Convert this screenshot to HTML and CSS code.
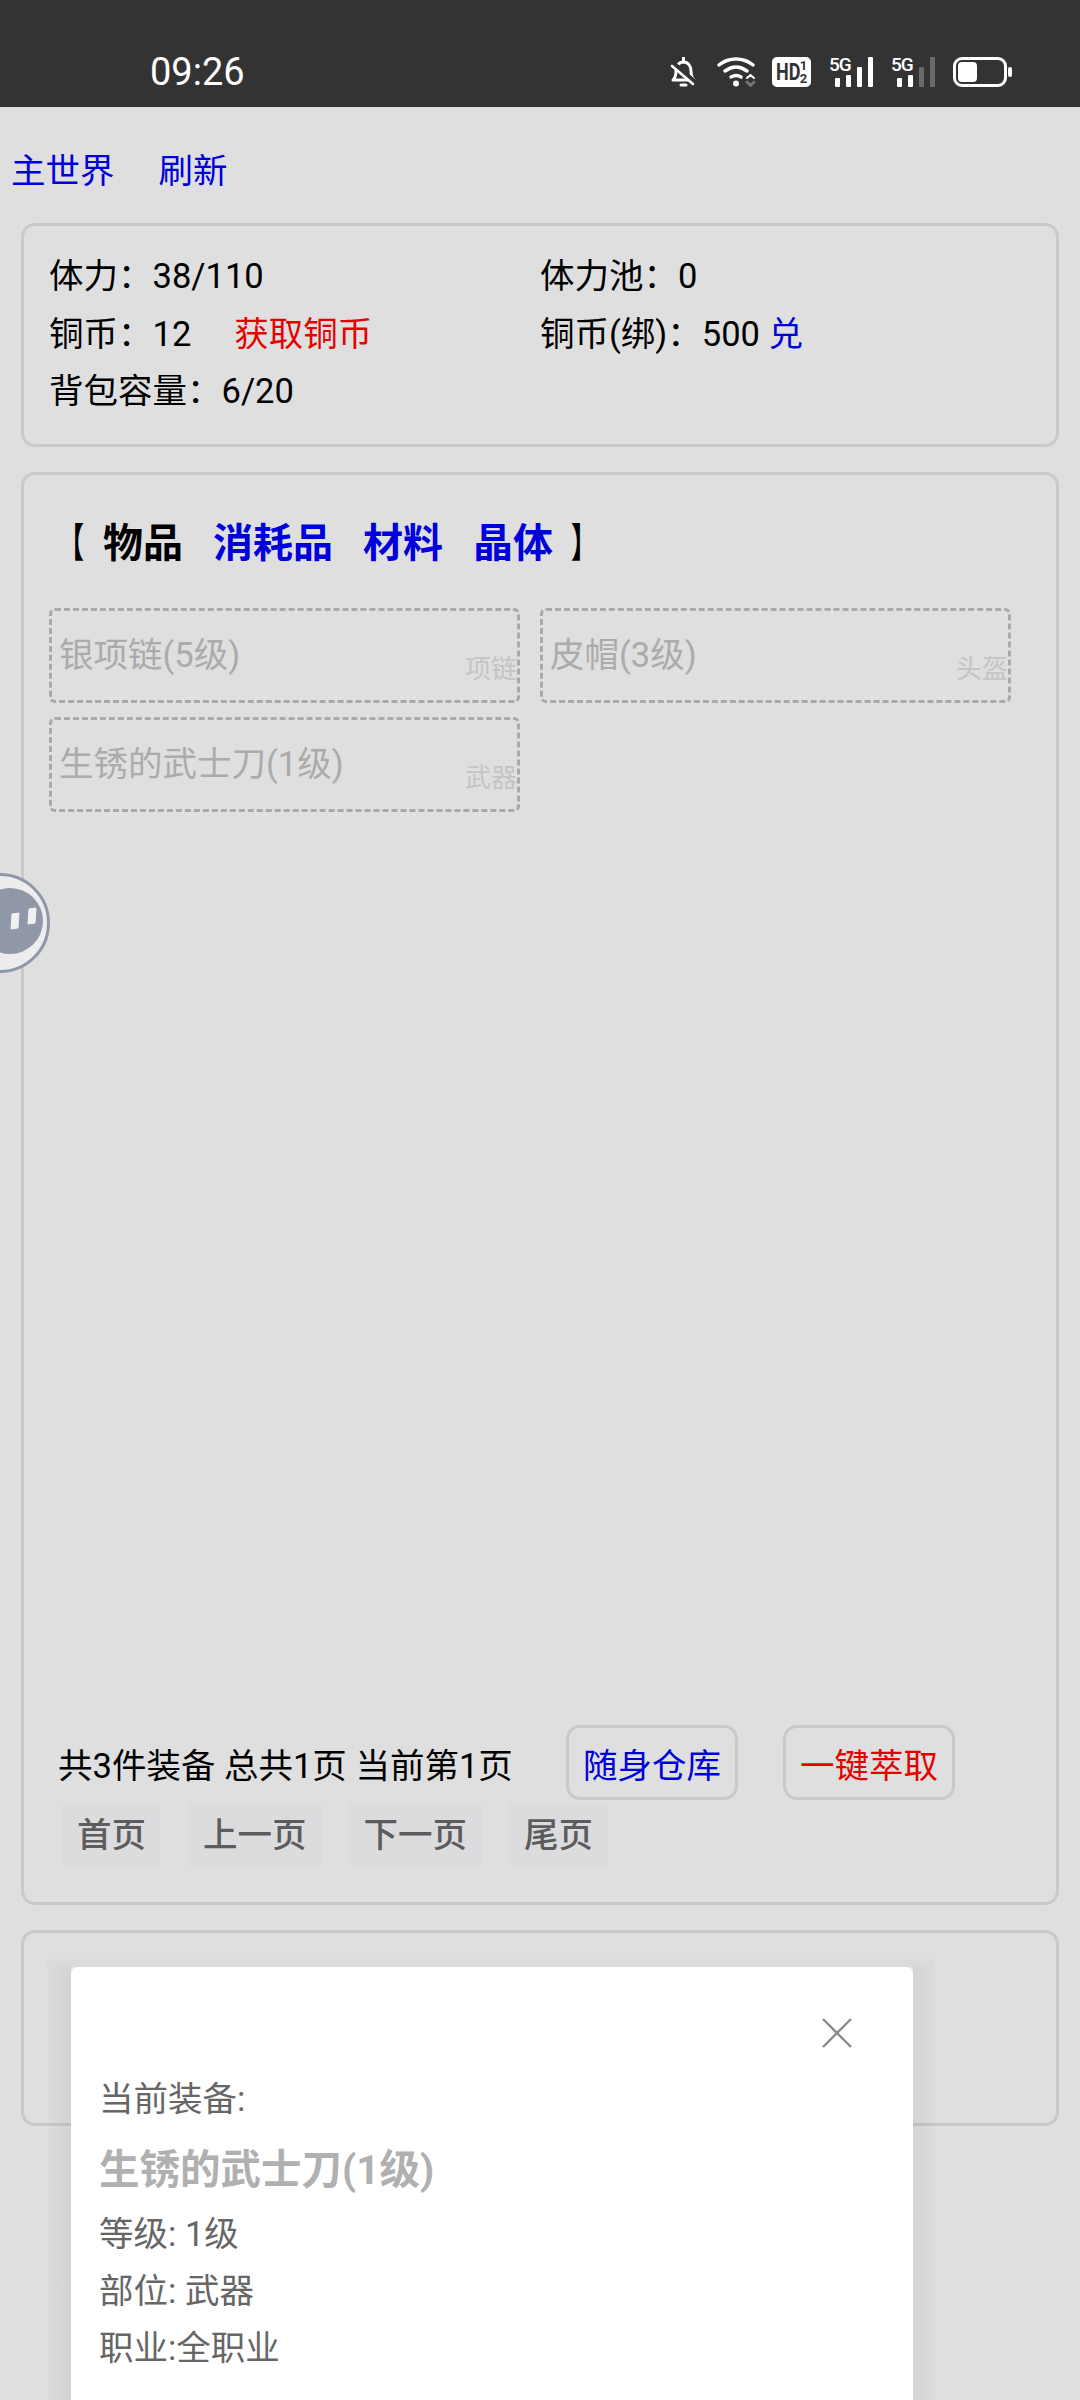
FILE: index.html
```html
<!DOCTYPE html>
<html lang="zh-CN">
<head>
    <meta charset="UTF-8">
    <meta name="viewport" content="width=device-width, initial-scale=1.0">
    <title>背包</title>
    <link rel="stylesheet" href="styles.css">
</head>
<body>

<div class="statusBar">
    <span class="clock">09:26</span>
    <div class="statusIcons">
        <svg class="bellIcon" width="27" height="30" viewBox="0 0 27 30" fill="none" stroke="#fff">
            <path d="M3 23c2-2 3-4 3-9 0-5 3-9 7.500-9s7.500 4 7.500 9c0 5 1 7 3 9z" stroke-width="3" stroke-linejoin="round"/>
            <path d="M13.500 1v4M11 28h5" stroke-width="3" stroke-linecap="round"/>
            <path d="M2 6l23 20" stroke="#333" stroke-width="6"/>
            <path d="M2 9l21 18" stroke-width="2.600" stroke-linecap="round"/>
        </svg>
        <svg class="wifiIcon" width="40" height="30" viewBox="0 0 40 30" fill="none" stroke="#fff" stroke-width="3.400" stroke-linecap="round">
            <path d="M2 8c10-8 24-8 34 0"/>
            <path d="M8 14c7-5 15-5 22 0"/>
            <path d="M14 20c4-2 7-2 10 0"/>
            <circle cx="19" cy="26.500" r="3" fill="#fff" stroke="none"/>
            <path d="M30 21l3.500-3 3.500 3" stroke-width="2"/>
            <path d="M30 25l3.500 3.500 3.500-3.500" stroke="#777" stroke-width="2.600"/>
        </svg>
        <span class="hdBadge"><span class="hdText">HD</span><span class="hdNum"><i>1</i><i>2</i></span></span>
        <div class="signal">
            <span class="netLabel">5G</span>
            <div class="bars">
                <i class="bar b1"></i><i class="bar b2"></i><i class="bar b3"></i><i class="bar b4"></i>
            </div>
        </div>
        <div class="signal">
            <span class="netLabel">5G</span>
            <div class="bars">
                <i class="bar b1"></i><i class="bar b2"></i><i class="bar b3 off"></i><i class="bar b4 off"></i>
            </div>
        </div>
        <div class="battery"><div class="batteryFill"></div></div>
    </div>
</div>

<div class="page">
    <div class="topLinks">
        <a>主世界</a>
        <a>刷新</a>
    </div>

    <div class="panel infoPanel">
        <div class="infoGrid">
            <div>体力：38/110</div>
            <div>体力池：0</div>
            <div>铜币：12<a class="red getCoin">获取铜币</a></div>
            <div>铜币(绑)：500 <a>兑</a></div>
            <div>背包容量：6/20</div>
        </div>
    </div>

    <div class="panel bagPanel">
        <div class="tabs">
            <span class="bracket">【</span>
            <span>物品</span>
            <a>消耗品</a>
            <a>材料</a>
            <a>晶体</a>
            <span class="bracket lastBracket">】</span>
        </div>
        <div class="itemGrid">
            <div class="item">银项链(5级)<span class="itemType">项链</span></div>
            <div class="item">皮帽(3级)<span class="itemType">头盔</span></div>
            <div class="item">生锈的武士刀(1级)<span class="itemType">武器</span></div>
        </div>
        <div class="bagFooter">
            <div class="summary">
                <span class="summaryText">共3件装备 总共1页 当前第1页</span>
                <a class="actionBtn">随身仓库</a>
                <a class="actionBtn red">一键萃取</a>
            </div>
            <div class="pager">
                <span>首页</span>
                <span>上一页</span>
                <span>下一页</span>
                <span>尾页</span>
            </div>
        </div>
    </div>

    <div class="panel lastPanel"></div>
</div>

<svg class="floatBall" width="52" height="104" viewBox="0 0 52 104">
    <circle cx="0" cy="52" r="48.500" fill="#eeeeee" stroke="#8b94a6" stroke-width="3"/>
    <circle cx="10" cy="50" r="33" fill="#8b94a6"/>
    <path d="M12 43l7-1-1 15-7 1z" fill="#f2f2f2" stroke="#f2f2f2" stroke-width="1" stroke-linejoin="round"/>
    <path d="M29 38l7-1-1 15-7 1z" fill="#f2f2f2" stroke="#f2f2f2" stroke-width="1" stroke-linejoin="round"/>
</svg>

<div class="modal">
    <svg class="closeIcon" width="32" height="30" viewBox="0 0 32 30" stroke="#8a8a8a" stroke-width="2.400" fill="none">
        <path d="M2 1l28 28M30 1L2 29"/>
    </svg>
    <div class="modalLine firstLine">当前装备:</div>
    <div class="modalTitle">生锈的武士刀(1级)</div>
    <div class="modalLine">等级: 1级</div>
    <div class="modalLine">部位: 武器</div>
    <div class="modalLine">职业:全职业</div>
    <div class="modalLine cutLine">攻击力</div>
</div>

</body>
</html>
```

FILE: styles.css
```css
html, body {
    margin: 0;
    padding: 0;
}
body {
    width: 1080px;
    height: 2400px;
    overflow: hidden;
    position: relative;
    background-color: #dfdfdf;
    color: #000;
    font-family: Roboto, "Noto Sans CJK SC", sans-serif;
    font-size: 34.5px;
}
a {
    color: #0000dd;
}
.red {
    color: #e60000;
}

/* status bar */
.statusBar {
    height: 107px;
    background-color: #333;
    display: flex;
    align-items: center;
    justify-content: space-between;
    padding: 37px 68px 0 150px;
    box-sizing: border-box;
    color: #fff;
}
.clock {
    font-size: 38px;
}
.statusIcons {
    display: flex;
    align-items: center;
    gap: 18px;
}
.bellIcon {
    margin-right: 2px;
}
.wifiIcon {
    margin-right: -3px;
}
.hdBadge {
    width: 39px;
    height: 30px;
    background-color: #fff;
    border-radius: 5px;
    color: #333;
    font-weight: 700;
    display: flex;
    align-items: center;
    justify-content: center;
    overflow: hidden;
}
.hdText {
    display: inline-block;
    font-size: 24px;
    width: 24px;
    transform: scaleX(0.75);
    transform-origin: left center;
}
.hdNum {
    display: flex;
    flex-direction: column;
    font-size: 13px;
    line-height: 13px;
}
.hdNum i {
    font-style: normal;
}
.signal {
    position: relative;
    width: 44px;
    height: 30px;
}
.netLabel {
    position: absolute;
    left: 0;
    top: -4px;
    font-size: 19px;
    font-weight: 500;
    letter-spacing: -1px;
    line-height: 24px;
}
.bars {
    position: absolute;
    left: 6px;
    bottom: 0;
    display: flex;
    align-items: flex-end;
    gap: 6px;
}
.bar {
    width: 5px;
    background-color: #fff;
    border-radius: 1px;
}
.bar.off {
    background-color: #6a6a6a;
}
.b1 { height: 9px; }
.b2 { height: 12px; }
.b3 { height: 20px; }
.b4 { height: 30px; }
.battery {
    position: relative;
    width: 54px;
    height: 30px;
    border: 3px solid #fff;
    border-radius: 9px;
    box-sizing: border-box;
    margin-right: 5px;
    padding: 2px;
}
.battery::after {
    content: "";
    position: absolute;
    right: -8px;
    top: 7px;
    width: 4px;
    height: 10px;
    background-color: #fff;
    border-radius: 2px;
}
.batteryFill {
    width: 19px;
    height: 100%;
    background-color: #fff;
    border-radius: 4px;
}

/* page */
.page {
    padding: 0 21px;
}
.topLinks {
    height: 116px;
    margin-left: -10px;
    display: flex;
    align-items: center;
    gap: 44px;
    padding-top: 6px;
    box-sizing: border-box;
}
.panel {
    border: 3px solid #c9c9c9;
    border-radius: 14px;
    box-sizing: border-box;
    margin-bottom: 25px;
    padding: 0 25px;
}
.infoPanel {
    height: 224px;
    padding-top: 22px;
}
.infoGrid {
    display: grid;
    grid-template-columns: 491px 1fr;
    line-height: 57.500px;
}
.getCoin {
    margin-left: 43px;
}

.bagPanel {
    height: 1433px;
    display: flex;
    flex-direction: column;
}
.tabs {
    font-size: 40px;
    font-weight: 700;
    display: flex;
    align-items: center;
    height: 60px;
    margin-top: 35px;
    margin-left: 17px;
    gap: 30px;
}
.tabs .bracket {
    width: 40px;
    margin: 0 -18px 0 -15px;
    text-align: center;
    transform: scaleX(0.65);
}
.tabs .lastBracket {
    margin-left: -19px;
}
.itemGrid {
    display: grid;
    grid-template-columns: 471px 471px;
    grid-auto-rows: 95px;
    column-gap: 20px;
    row-gap: 14px;
    margin-top: 38px;
}
.item {
    position: relative;
    border: 3px dashed #a9a9a9;
    border-radius: 6px;
    box-sizing: border-box;
    color: #ababab;
    padding: 16px 7px 0;
    white-space: nowrap;
}
.itemType {
    position: absolute;
    right: 0;
    bottom: 15px;
    color: #c4c4c4;
    font-size: 26px;
}
.bagFooter {
    margin-top: auto;
    padding-bottom: 35px;
    margin-left: 9px;
}
.summary {
    display: flex;
    align-items: center;
}
.summaryText {
    width: 508px;
}
.actionBtn {
    width: 172px;
    height: 75px;
    border: 3px solid #c9c9c9;
    border-radius: 14px;
    box-sizing: border-box;
    display: flex;
    align-items: center;
    justify-content: center;
    margin-right: 45px;
}
.pager {
    display: flex;
    gap: 27px;
    margin-top: 3px;
    margin-left: 4px;
    color: #5c5c5c;
}
.pager span {
    background-color: #dcdcdf;
    height: 64px;
    line-height: 64px;
    padding: 0 15px;
    font-weight: 500;
}
.lastPanel {
    height: 196px;
}

/* float ball */
.floatBall {
    position: absolute;
    left: 0;
    top: 871px;
    opacity: 0.95;
}

/* modal */
.modal {
    position: absolute;
    z-index: 1;
    left: 71px;
    top: 1967px;
    width: 842px;
    height: 460px;
    background-color: #fff;
    border-radius: 6px;
    padding: 104px 28px 0;
    box-sizing: border-box;
    color: #666;
}
.modal::before {
    content: "";
    position: absolute;
    z-index: -1;
    top: -18px;
    left: -24px;
    right: -22px;
    bottom: 0;
    background:
        linear-gradient(to right, rgba(0, 0, 0, 0.015), rgba(0, 0, 0, 0.05)) left 18px / 24px 100% no-repeat,
        linear-gradient(to left, rgba(0, 0, 0, 0.015), rgba(0, 0, 0, 0.05)) right 18px / 22px 100% no-repeat,
        linear-gradient(to bottom, rgba(0, 0, 0, 0.005), rgba(0, 0, 0, 0.025)) left top / 100% 18px no-repeat;
}
.closeIcon {
    position: absolute;
    right: 60px;
    top: 51px;
}
.modalLine {
    line-height: 57px;
}
.firstLine {
    margin-bottom: 11.500px;
}
.modalTitle {
    font-size: 40.500px;
    font-weight: 700;
    color: #b0b0b0;
    line-height: 60px;
    margin-bottom: 6.500px;
}
.cutLine {
    margin-top: 14px;
}
```
